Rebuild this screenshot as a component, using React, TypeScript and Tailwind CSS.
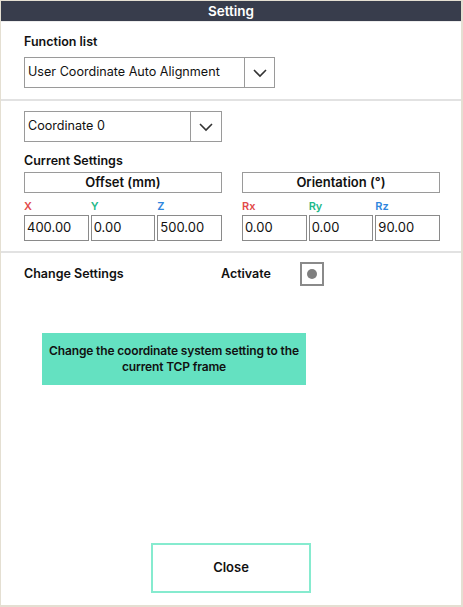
import React from "react";

const font = { fontFamily: "Inter, 'Open Sans', sans-serif" };

function Chevron() {
  return (
    <svg width="16" height="10" viewBox="0 0 16 10" fill="none">
      <path d="M2 2 L8 8 L14 2" stroke="#333" strokeWidth="1.6" fill="none" />
    </svg>
  );
}

function Select({ label, width, arrowW }: { label: string; width: string; arrowW: string }) {
  return (
    <div className={`flex h-[31px] ${width} border border-[#9a9a9a] bg-white`}>
      <div className="flex-1 flex items-center pl-[3px] text-[12.6px] text-[#111]">{label}</div>
      <div className={`${arrowW} border-l border-[#9a9a9a] flex items-center justify-center`}>
        <Chevron />
      </div>
    </div>
  );
}

function Field({ v }: { v: string }) {
  return (
    <div className="h-[26px] border border-[#8a8a8a] flex items-center pl-[2px] text-[13px] text-[#111]">{v}</div>
  );
}

function Group({ title, labels, values }: { title: string; labels: [string, string][]; values: string[] }) {
  return (
    <div className="w-[198px] flex flex-col">
      <div className="h-[21px] border border-[#9a9a9a] flex items-center justify-center text-[13px] font-semibold text-[#111]">
        {title}
      </div>
      <div className="grid grid-cols-3 gap-x-[2px] mt-[5px]">
        {labels.map(([l, c]) => (
          <div key={l} className={`text-[11px] font-semibold h-[16px] leading-[16px] ${c}`}>{l}</div>
        ))}
      </div>
      <div className="grid grid-cols-3 gap-x-[2px] mt-[1px]">
        {values.map((v, i) => (
          <Field key={i} v={v} />
        ))}
      </div>
    </div>
  );
}

export default function App() {
  return (
    <div
      style={font}
      className="w-[463px] h-[607px] bg-white border-l border-t border-r-2 border-b-2 border-[#e4dfd2] flex flex-col"
    >
      <div className="h-[20px] bg-[#383d4c] flex items-center justify-center text-white text-[13.5px] font-semibold">
        Setting
      </div>
      <div className="border-t border-[#ececec]" />
      <div className="pl-[23px] pt-[12px] pb-[11px] flex flex-col">
        <div className="text-[12.5px] font-semibold text-[#111] h-[16px] leading-[16px]">Function list</div>
        <div className="mt-[7px]">
          <Select label="User Coordinate Auto Alignment" width="w-[251px]" arrowW="w-[30px]" />
        </div>
      </div>
      <div className="border-t-2 border-[#e2e2e2]" />
      <div className="pl-[23px] pt-[10px] pb-[10px] flex flex-col">
        <Select label="Coordinate 0" width="w-[198px]" arrowW="w-[31px]" />
        <div className="mt-[11px] text-[12.5px] font-semibold text-[#111] h-[16px] leading-[16px]">Current Settings</div>
        <div className="mt-[3px] flex gap-[20px]">
          <Group
            title="Offset (mm)"
            labels={[["X", "text-[#e24a4a]"], ["Y", "text-[#1fb98a]"], ["Z", "text-[#2e86de]"]]}
            values={["400.00", "0.00", "500.00"]}
          />
          <Group
            title="Orientation (°)"
            labels={[["Rx", "text-[#e24a4a]"], ["Ry", "text-[#1fb98a]"], ["Rz", "text-[#2e86de]"]]}
            values={["0.00", "0.00", "90.00"]}
          />
        </div>
      </div>
      <div className="border-t-2 border-[#e2e2e2]" />
      <div className="pl-[23px] pt-[9px] flex items-center">
        <div className="w-[197px] text-[12.5px] font-semibold text-[#111]">Change Settings</div>
        <div className="w-[79px] text-[12.5px] font-semibold text-[#111]">Activate</div>
        <div className="w-[24px] h-[24px] border-2 border-[#8a8a8a] flex items-center justify-center">
          <div className="w-[10px] h-[10px] rounded-full bg-[#7f7f7f]" />
        </div>
      </div>
      <div className="pl-[41px] mt-[47px]">
        <div className="w-[264px] h-[52px] bg-[#64e1c1] flex flex-col items-center justify-center text-center text-[12px] tracking-[-0.15px] whitespace-nowrap font-semibold text-[#111] leading-[16px]">
          <div>Change the coordinate system setting to the</div>
          <div>current TCP frame</div>
        </div>
      </div>
      <div className="flex-1" />
      <div className="flex justify-center pb-[12px]">
        <button className="w-[160px] h-[50px] border-2 border-[#86ebcf] bg-white text-[13px] font-semibold text-[#111]">
          Close
        </button>
      </div>
    </div>
  );
}
